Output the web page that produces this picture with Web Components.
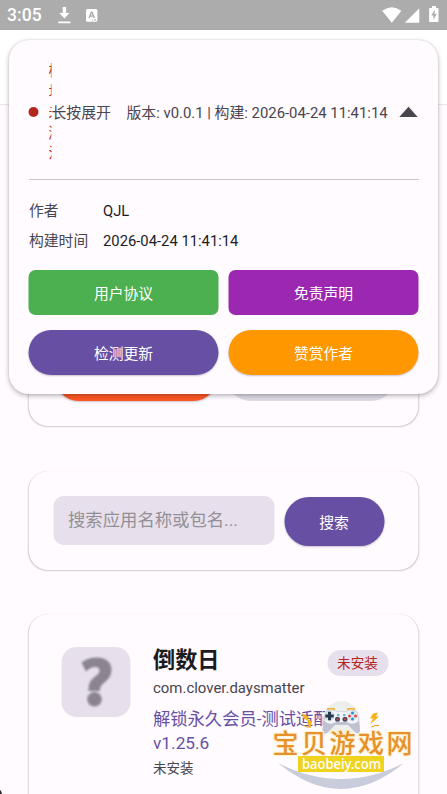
<!DOCTYPE html>
<html lang="zh-CN">
<head>
<meta charset="utf-8">
<title>应用中心</title>
<style>
html,body{margin:0;height:794px;overflow:hidden}
body{font-family:Roboto,"Noto Sans CJK SC",sans-serif;background:#fffbff;color:#1c1b1f}
</style>
</head>
<body>
<app-screen></app-screen>
<script>
function define(name, html) {
  customElements.define(name, class extends HTMLElement {
    constructor() {
      super();
      const t = document.createElement('template');
      t.innerHTML = html;
      this.attachShadow({ mode: 'open' }).appendChild(t.content.cloneNode(true));
    }
  });
}

define('status-bar', `
<style>
:host{display:flex;height:30px;background:#acacac;color:#fff;align-items:center;box-sizing:border-box;padding:0 8px 0 7px}
.time{font-size:17.5px;font-weight:500;line-height:30px;width:51px;letter-spacing:.1px}
svg{display:block;fill:#fff}
.gap{flex:1}
</style>
<span class="time">3:05</span>
<svg width="13" height="17" viewBox="0 0 13 17"><path d="M4.7 0h3.4v6h3.4L6.4 11.5 1.3 6h3.4zM.3 14.6h12.2v1.6H.3z"/></svg>
<svg style="margin-left:15px" width="12" height="13" viewBox="0 0 12 13"><rect width="11.4" height="12.8" rx="1.5"/><path d="M4.8 2.5h1.7L9 9H7.4L7 7.8H4.3L3.9 9H2.4zM5.6 4.2l-.8 2.3h1.7z" fill="#acacac" fill-rule="evenodd"/><path d="M6 10.6h1v1H6zm2 0h2v1H8z" fill="#acacac"/></svg>
<span class="gap"></span>
<svg width="20" height="16" viewBox="0 0 20 16"><path d="M.2 3.8Q9.8-3.2 19.4 3.8L9.8 15.8z"/></svg>
<svg style="margin-left:2px" width="16" height="15" viewBox="0 0 16 15"><path d="M15.3.3V14.8H.8z"/></svg>
<svg style="margin:-2px 0 0 9px" width="10" height="17" viewBox="0 0 10 17"><path d="M3 0h4v2h1.700q.8 0 .8.8v12.400q0 .8-.8.8H.9q-.8 0-.8-.8V2.8q0-.8.8-.8H3z"/><path d="M5.800 3.7 2.2 9.5h2.2V14L7.800 8H5.600z" fill="#acacac"/></svg>
`);

define('surface-card', `
<style>
:host{display:block;box-sizing:border-box;width:390px;border-radius:20px;background:#fffbff;transform:translateX(-.5px);
 box-shadow:0 1px 1.5px rgba(40,25,50,.2),0 0 1px rgba(40,25,50,.14)}
</style><slot></slot>`);

define('action-button', `
<style>
:host{display:flex;box-sizing:border-box;height:45px;align-items:center;justify-content:center;color:#fff;font-size:14.8px;
 background:var(--fill);border-radius:23px;box-shadow:0 1px 2px rgba(30,15,50,.24);padding-bottom:1px}
:host([square]){border-radius:7px;box-shadow:none}
:host([flat]){box-shadow:none}
</style><slot></slot>`);

define('info-row', `
<style>
:host{display:grid;grid-template-columns:74px 1fr;height:30px;align-items:center;font-size:14.8px}
.k{color:#49454f;padding-bottom:3px}
.v{color:#1c1b1f}
</style><span class="k"><slot name="label"></slot></span><span class="v"><slot></slot></span>`);

define('info-panel', `
<style>
:host{display:block;box-sizing:border-box;width:429px;height:354px;padding:20px 19px 0 20px;background:#fffbff;border-radius:20px;
 box-shadow:0 2px 5px rgba(20,15,25,.28),0 0 2px rgba(20,15,25,.16)}
header{display:flex;align-items:center;height:106px;font-size:14.87px;color:#49454f;white-space:nowrap;transform:translateX(-.5px)}
.dot{width:10px;height:10px;border-radius:50%;background:#b3261e;margin:-2px 10px 0 0;flex:none}
.state{width:3px;overflow:hidden;color:#b3261e;line-height:20.6px;flex:none;white-space:normal;word-break:break-all;padding-bottom:1px}
.hint{width:75px;padding-bottom:4px}
.ver{flex:1;padding-bottom:4px}
.arrow{display:block;margin-top:-2px;filter:blur(.6px)}
hr{border:0;height:1px;background:#cac4cc;margin:13px 0 16px}
.grid{display:grid;grid-template-columns:190px 190px;gap:15px 10px;margin-top:14px;transform:translateX(-.5px)}
</style>
<header>
<span class="dot"></span><span class="state">模块未激活</span><span class="hint">长按展开</span>
<span class="ver">版本: v0.0.1 | 构建: 2026-04-24 11:41:14</span>
<svg class="arrow" width="20" height="12" viewBox="0 0 20 12"><path d="M10 .8 19.2 11H.8z" fill="#49454f"/></svg>
</header>
<hr>
<info-row><span slot="label">作者</span>QJL</info-row>
<info-row><span slot="label">构建时间</span>2026-04-24 11:41:14</info-row>
<div class="grid">
<action-button square style="--fill:#4caf50">用户协议</action-button>
<action-button square style="--fill:#9c27b0">免责声明</action-button>
<action-button style="--fill:#6750a4">检测更新</action-button>
<action-button style="--fill:#ff9800">赞赏作者</action-button>
</div>`);

define('search-bar', `
<style>
:host{display:flex;gap:10px;padding:25px 34px 25px 25px;height:50px}
.field{width:221px;height:49px;border-radius:10px;background:#e7e0ec;color:#938f96;font-size:17.35px;line-height:49px;padding-left:15px;box-sizing:border-box;white-space:nowrap}
action-button{width:100px;height:49px;border-radius:25px;margin-top:1px;--fill:#6750a4}
</style>
<div class="field">搜索应用名称或包名...</div><action-button>搜索</action-button>`);

define('app-entry', `
<style>
:host{display:flex;padding:33px 30px 0 33px}
.icon{width:69px;height:70px;border-radius:15px;background:#e7e0ec;flex:none}
.icon svg{display:block;filter:blur(.8px)}
.body{margin-left:23px;flex:1;white-space:nowrap}
.top{display:flex;justify-content:space-between;height:31px}
.name{font-size:22.2px;font-weight:700;line-height:26px}
.tag{width:61px;height:26px;margin-top:3px;border-radius:13px;background:#e7e0ec;color:#b3261e;font-size:13.6px;line-height:27px;text-align:center}
.pkg{font-size:14.95px;line-height:20px;color:#49454f}
.ver{font-size:17.3px;line-height:23.5px;color:#6750a4;margin-top:10px;width:181px;overflow:hidden}
.st{font-size:13.5px;line-height:20px;color:#49454f;margin-top:3px}
</style>
<div class="icon"><svg width="69" height="70" viewBox="0 0 69 70" fill="#8b8490"><path d="M20 15.500Q27 10.500 35 10.500C44 10.500 50 15 50 22.500C50 29 47 32 42.500 36C39 39 38.500 40 38.500 44H27C27 37 28 34 33 30C37 27 38 25.500 38 23.500C38 20.500 35.500 20 33 20Q29 20 24.500 24.500Z"/><circle cx="33" cy="52.300" r="7.300"/></svg></div>
<div class="body">
<div class="top"><span class="name">倒数日</span><span class="tag">未安装</span></div>
<div class="pkg">com.clover.daysmatter</div>
<div class="ver">解锁永久会员-测试适配<br>v1.25.6</div>
<div class="st">未安装</div>
</div>`);

define('site-badge', `
<style>
:host{display:block;width:150px;height:94px}
svg{display:block}
text{font-family:"Noto Sans CJK SC",sans-serif}
.latin{font-family:"Noto Sans","Open Sans",sans-serif}
</style>
<svg width="150" height="94" viewBox="270 700 150 94">
<circle cx="341.500" cy="719.500" r="18.500" fill="#eceeec" opacity=".97"/>
<path d="M278 763Q341 815 404 763Q341 795 278 763Z" fill="#c9ccda"/>
<path d="M302 713l7 4-1 2 4 3-2 6-3-5 1-2-5-3zM373 713.500l5-1-2 4 3 0-9 8 3-6-3 0z" fill="#f6b51c"/>
<path d="M303 725q4 3 8 2M371 727q4-2 8-1.500" stroke="#ef9a19" stroke-width="1" fill="none"/>
<path d="M328 710.500v-1.800h6v1.800M348 710.500v-1.800h6v1.800" stroke="#f4b52e" stroke-width="1.600" fill="none"/>
<path d="M326 711Q331 708.500 336 711H347Q353 708.500 357 712C359 718 360 726 360 731C359.500 735 356 734 352 729L348 725H335L330 730C326 735 322 735 322.500 729Q323.500 717 326 711Z" fill="#bfc2d1"/>
<path d="M326 712Q331 709 336 711.500H347Q352 709 356.500 712.500L358.500 721Q353 726 347 722H336Q329 726 324.500 721Z" fill="#f3f3f8"/>
<circle cx="329.500" cy="716" r="5" fill="#d1e1e8"/><path d="M328 711.800h3v2.700h2.700v3H331v2.700h-3v-2.700h-2.700v-3h2.700z" fill="#263b50"/>
<circle cx="337.500" cy="719.300" r="2.500" fill="#46475c"/><circle cx="345" cy="719.300" r="2.500" fill="#46475c"/>
<circle cx="337.500" cy="719.300" r="1" fill="#d84646"/><circle cx="345" cy="719.300" r="1" fill="#d84646"/>
<path d="M337 715h2.500m3.500 0h2.500" stroke="#35b3c2" stroke-width="1.500"/>
<circle cx="352.500" cy="716" r="5" fill="#dfeaf1"/>
<circle cx="352.500" cy="713" r="1.500" fill="#298fcf"/><circle cx="352.500" cy="719" r="1.500" fill="#298fcf"/><circle cx="349.500" cy="716" r="1.500" fill="#e64b44"/><circle cx="355.500" cy="716" r="1.500" fill="#e64b44"/>
<text x="272.500" y="752.500" font-size="26" font-weight="500" textLength="140" lengthAdjust="spacing" fill="#e6912b" stroke="#fff4cf" stroke-width="2" paint-order="stroke">宝贝游戏网</text>
<rect x="298" y="756" width="86" height="16" fill="#efd31f"/>
<text class="latin" x="302" y="768.500" font-size="13.800" font-weight="500" textLength="79" lengthAdjust="spacingAndGlyphs" fill="#fff">baobeiy.com</text>
</svg>`);

define('app-screen', `
<style>
:host{display:block;position:relative;width:447px;height:794px;overflow:hidden}
.bar{height:74px;background:#fff;border-bottom:1px solid #e9e5e9}
main{display:flex;flex-direction:column;align-items:center;width:447px}
.tools{height:286px;margin-top:35px;display:flex;align-items:flex-end;padding:0 24px 25px 27px;gap:11px}
.tools action-button{width:162px;height:46px}
.tools action-button+action-button{width:167px}
.search{height:99px;margin-top:45px}
.entry{height:220px;margin-top:44px;flex:none}
info-panel{position:absolute;left:9px;top:40px}
site-badge{position:absolute;left:270px;top:700px}
.corner{position:absolute;left:0;top:790px;width:2px;height:4px;background:#222;clip-path:polygon(0 0,50% 25%,100% 100%,0 100%)}
</style>
<status-bar></status-bar>
<div class="bar"></div>
<main>
<surface-card class="tools"><action-button style="--fill:#ff5722"></action-button><action-button flat style="--fill:#e0dce6"></action-button></surface-card>
<surface-card class="search"><search-bar></search-bar></surface-card>
<surface-card class="entry"><app-entry></app-entry></surface-card>
</main>
<info-panel></info-panel>
<site-badge></site-badge>
<div class="corner"></div>`);
</script>
</body>
</html>
